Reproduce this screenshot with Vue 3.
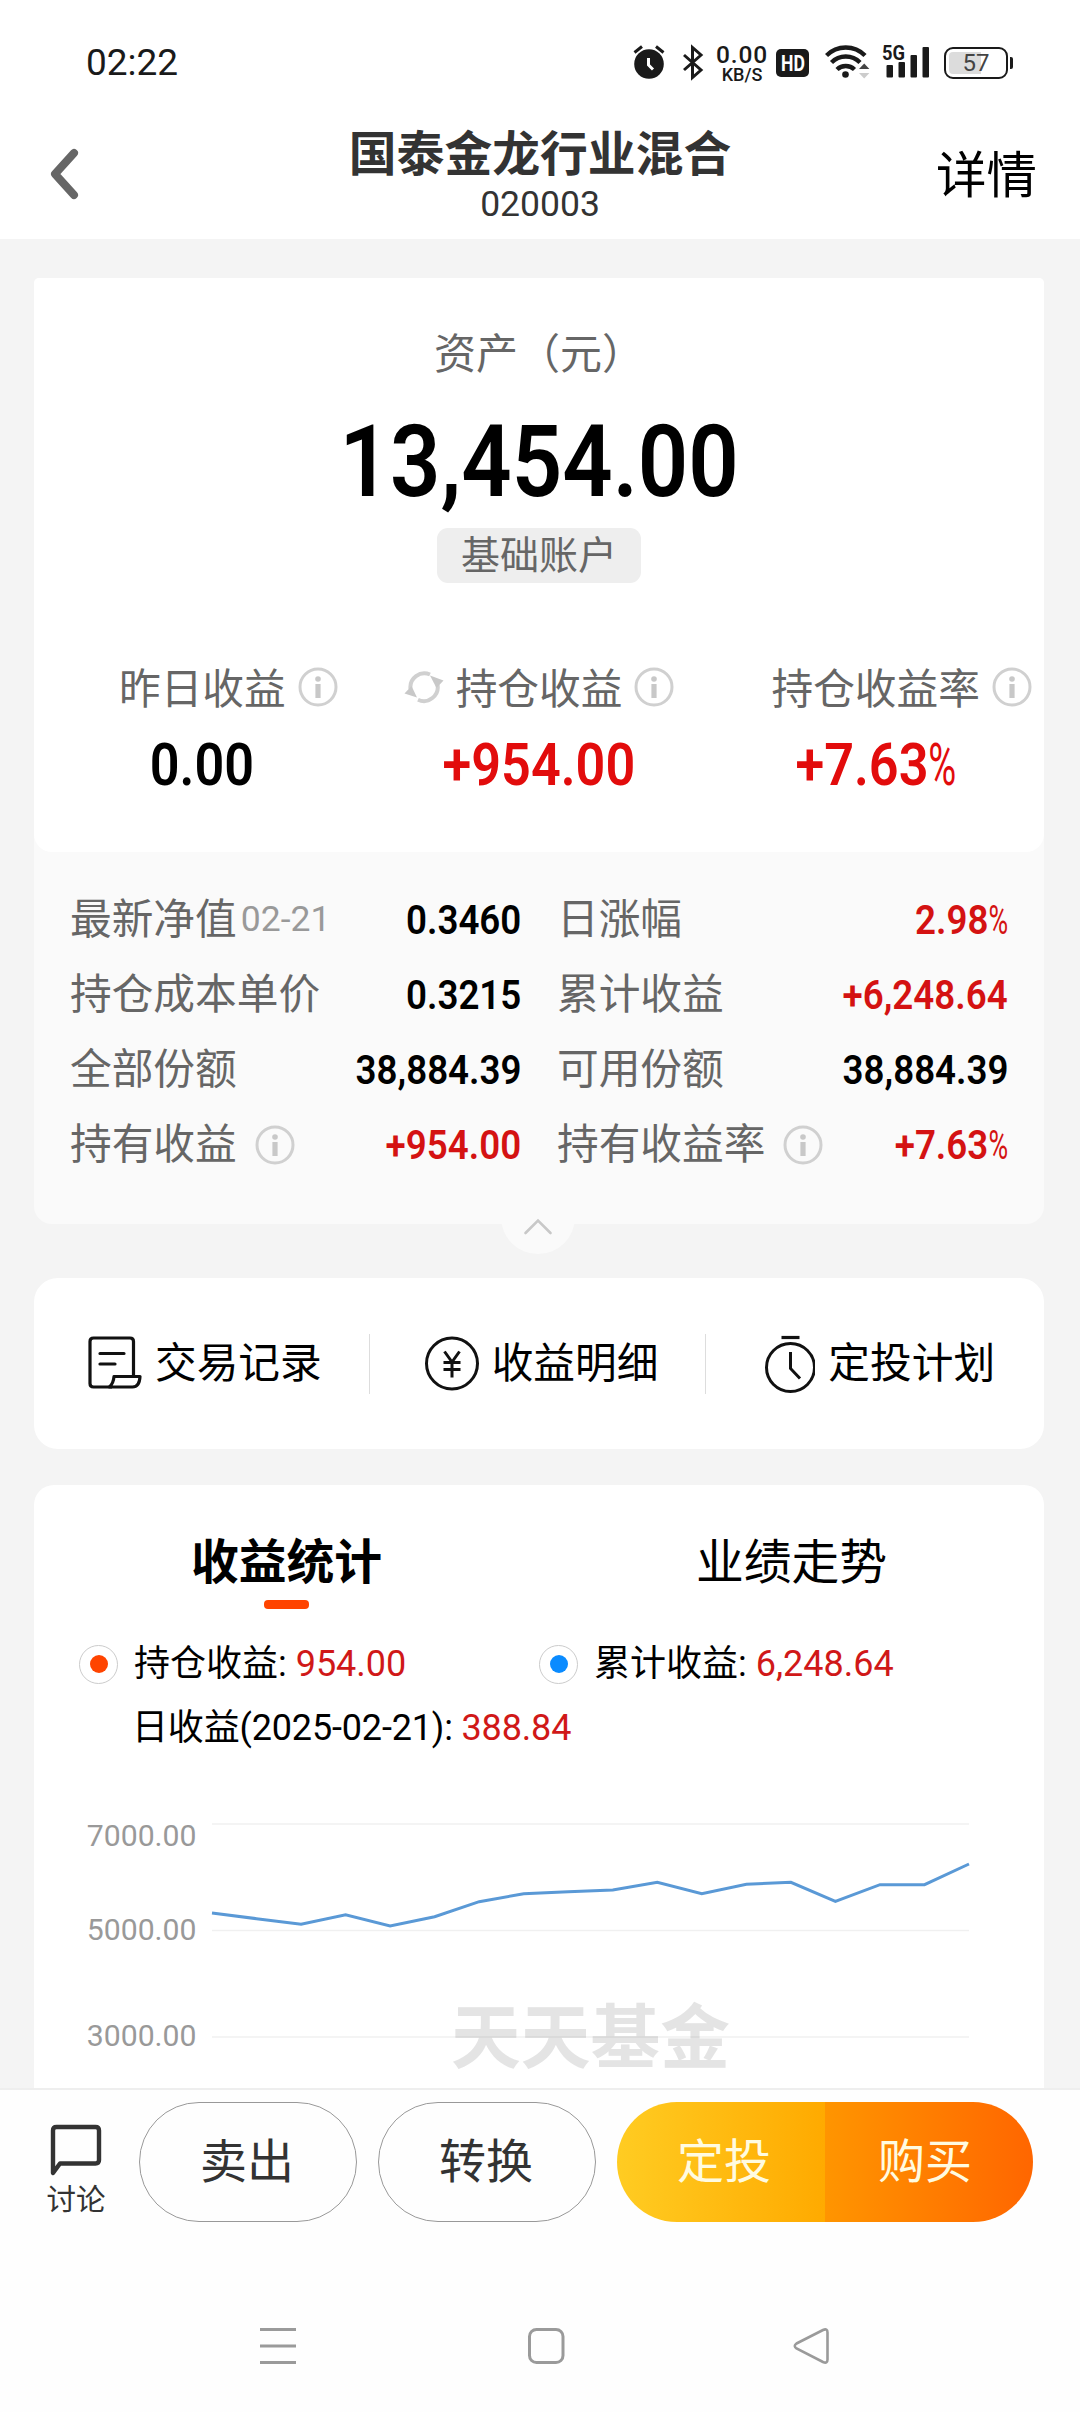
<script setup>
import { h } from 'vue'

const InfoIcon = () =>
  h('svg', { width: 40, height: 40, viewBox: '0 0 40 40', fill: 'none' }, [
    h('circle', { cx: 20, cy: 20, r: 18, stroke: '#d0d0d0', 'stroke-width': 3 }),
    h('circle', { cx: 20, cy: 12, r: 2.8, fill: '#c8c8c8' }),
    h('rect', { x: 17.4, y: 17, width: 5.2, height: 14, fill: '#c8c8c8' }),
  ])

const summary = [
  { label: '昨日收益', value: '0.00' },
  { label: '持仓收益', value: '+954.00', up: true, refresh: true },
  { label: '持仓收益率', value: '+7.63', pct: true, up: true },
]

const details = [
  { label: '最新净值', date: '02-21', value: '0.3460' },
  { label: '日涨幅', value: '2.98', pct: true, up: true },
  { label: '持仓成本单价', value: '0.3215' },
  { label: '累计收益', value: '+6,248.64', up: true },
  { label: '全部份额', value: '38,884.39' },
  { label: '可用份额', value: '38,884.39' },
  { label: '持有收益', info: true, value: '+954.00', up: true },
  { label: '持有收益率', info: true, value: '+7.63', pct: true, up: true },
]

const ticks = [
  { text: '7000.00', grid: 75, base: 97 },
  { text: '5000.00', grid: 181.5, base: 191 },
  { text: '3000.00', grid: 288, base: 297 },
]

const series = [164, 169.7, 175.3, 165.7, 177, 167.7, 152.7, 144.7, 142.7, 141, 133.3, 144.7, 135.3, 133.3, 152.3, 135.7, 135.7, 115]
const line = series.map((y, i) => `${(178 + i * 44.53).toFixed(1)},${y}`).join(' ')
</script>

<template>
  <div class="page">
    <header class="head">
      <div class="status">
        <span class="time">02:22</span>
        <div class="status-icons">
          <svg width="32" height="40" viewBox="0 0 32 40">
            <circle cx="16" cy="22" r="14.8" fill="#1a1a1a" />
            <path d="M1.5 10.5 9 4.5M30.5 10.5 23 4.5" stroke="#1a1a1a" stroke-width="3" />
            <path d="M15.5 16v7l4.500 4.500" stroke="#fff" stroke-width="3" fill="none" />
          </svg>
          <svg class="bt" width="22" height="40" viewBox="0 0 22 40">
            <path d="M2 13 19 28 10.500 35.500V5.500L19 13 2 28" stroke="#1a1a1a" stroke-width="3" fill="none" />
          </svg>
          <div class="speed"><b>0.00</b><i>KB/S</i></div>
          <div class="hd"><span>HD</span></div>
          <svg class="wifi" width="46" height="40" viewBox="0 0 46 40" fill="none" stroke="#1a1a1a" stroke-width="4.4">
            <path d="M1.5 13.5a27 27 0 0 1 38.500 0M6.500 20.500a20 20 0 0 1 28.500 0M12 27.500a12.500 12.500 0 0 1 17.500 0" />
            <circle cx="20.5" cy="32.5" r="3.300" fill="#1a1a1a" stroke="none" />
            <path d="M34 27 39.200 21.500 44.400 27z" fill="#444" stroke="none" />
            <path d="M34 31h10.400l-5.200 5.500z" fill="#ccc" stroke="none" />
          </svg>
          <svg class="signal" width="48" height="40" viewBox="0 0 48 40">
            <g fill="#1a1a1a">
              <rect x="4.5" y="23" width="6.500" height="12.500" rx="1" />
              <rect x="16.5" y="20" width="6.500" height="15.500" rx="1" />
              <rect x="28.5" y="13" width="6.500" height="22.500" rx="1" />
              <rect x="40.5" y="5" width="6.500" height="30.500" rx="1" />
              <text x="0" y="18" font-size="20.5" font-weight="700" textLength="23" lengthAdjust="spacingAndGlyphs">5G</text>
            </g>
          </svg>
          <div class="battery"><span>57</span></div>
        </div>
      </div>
      <div class="bar">
        <svg class="back" width="40" height="60" viewBox="0 0 40 60">
          <path d="M31 9 12 30 31 51" fill="none" stroke="#666" stroke-width="8" stroke-linecap="round" stroke-linejoin="round" />
        </svg>
        <div class="titles">
          <h1>国泰金龙行业混合</h1>
          <p>020003</p>
        </div>
        <span class="more">详情</span>
      </div>
    </header>

    <main class="main">
      <section class="asset">
        <div class="asset-top">
          <p class="caption">资产（元）</p>
          <p class="total"><span class="num">13,454.00</span></p>
          <span class="tag">基础账户</span>
          <div class="summary">
            <div v-for="s in summary" :key="s.label" class="cell">
              <div class="cell-label">
                <svg v-if="s.refresh" class="refresh" width="40" height="36" viewBox="0 0 40 36">
                  <path d="M6.500 20a14 14 0 0 1 19.500-14.500M33.500 15.500A14 14 0 0 1 14 30.800" fill="none" stroke="#d0d0d0" stroke-width="4" />
                  <path d="M26 6.500 39.500 11.500 32.500 19z" fill="#c8c8c8" />
                  <path d="M.5 24.500 7.500 17 13 28.500z" fill="#c8c8c8" />
                </svg>
                <span>{{ s.label }}</span>
                <InfoIcon class="tip" />
              </div>
              <div class="cell-value" :class="{ up: s.up }"><span class="num">{{ s.value }}<i v-if="s.pct" class="pct">%</i></span></div>
            </div>
          </div>
        </div>
        <div class="details">
          <div v-for="d in details" :key="d.label" class="row">
            <span>{{ d.label }}</span>
            <small v-if="d.date">{{ d.date }}</small>
            <InfoIcon v-if="d.info" class="row-tip" />
            <span class="num row-value" :class="{ up: d.up }">{{ d.value }}<i v-if="d.pct" class="pct">%</i></span>
          </div>
        </div>
        <div class="fold">
          <svg width="32" height="20" viewBox="0 0 32 20">
            <path d="M3.500 17 16 4.500 28.500 17" fill="none" stroke="#c8c8c8" stroke-width="2.600" stroke-linecap="round" />
          </svg>
        </div>
      </section>

      <nav class="actions">
        <a>
          <svg width="54" height="60" viewBox="0 0 54 60" fill="none" stroke="#111" stroke-width="3.200" stroke-linejoin="round">
            <path d="M24 53H5.500Q2 53 2 49.500V7.500Q2 4 5.500 4H42Q45.500 4 45.500 7.500V42" />
            <path d="M26 42.500H52Q51.500 53 44.500 53H21.500Q25.500 49 26 42.500z" />
            <path d="M12 19.500h24M12 30h15" stroke-linecap="round" />
          </svg>交易记录</a>
        <a>
          <svg width="54" height="60" viewBox="0 0 54 60" fill="none" stroke="#111" stroke-width="3">
            <circle cx="27" cy="29.500" r="25.500" />
            <path d="M19.500 17.500 27 28 34.500 17.500M27 28v15.500M18.500 28.500h17M18.500 35.500h17" />
          </svg>收益明细</a>
        <a>
          <svg width="54" height="60" viewBox="0 0 54 60" fill="none" stroke="#111" stroke-width="3">
            <circle cx="29.500" cy="33.500" r="24" />
            <path d="M20.500 3.500h18" stroke-width="3.200" />
            <path d="M29.500 18v16.500l9.500 10" />
          </svg>定投计划</a>
      </nav>

      <section class="stats">
        <div class="tabs">
          <div class="tab active">收益统计</div>
          <div class="tab">业绩走势</div>
        </div>
        <div class="legend">
          <div class="key"><span class="ring orange"></span><span>持仓收益: <em>954.00</em></span></div>
          <div class="key"><span class="ring blue"></span><span>累计收益: <em>6,248.64</em></span></div>
        </div>
        <p class="daily">日收益(2025-02-21): <em>388.84</em></p>
        <svg class="chart" width="1010" height="351" viewBox="0 0 1010 351">
          <text class="watermark" x="417" y="314" textLength="279" lengthAdjust="spacingAndGlyphs">天天基金</text>
          <g v-for="t in ticks" :key="t.text">
            <line x1="178" x2="935" :y1="t.grid" :y2="t.grid" stroke="#000" stroke-opacity=".06" stroke-width="1.5" />
            <text class="tick" x="162.5" :y="t.base" text-anchor="end">{{ t.text }}</text>
          </g>
          <polyline :points="line" fill="none" stroke="#5a99d6" stroke-width="3" />
        </svg>
      </section>
    </main>

    <footer class="foot">
      <div class="trade">
        <div class="talk">
          <svg width="54" height="56" viewBox="0 0 54 56">
            <path d="M4 51V8.500Q4 5 7.500 5H46.500Q50 5 50 8.500V38Q50 41.500 46.500 41.500H11z" fill="none" stroke="#333" stroke-width="4.400" stroke-linejoin="round" />
          </svg>
          <span>讨论</span>
        </div>
        <button class="ghost">卖出</button>
        <button class="ghost">转换</button>
        <div class="buy"><button class="plan">定投</button><button class="now">购买</button></div>
      </div>
      <div class="sysnav">
        <svg width="1080" height="44" viewBox="0 0 1080 44" fill="none" stroke="#9a9a9a" stroke-width="3">
          <path d="M260 5.500h36M260 22h36M260 38.500h36" />
          <rect x="529.500" y="5.500" width="33.500" height="33" rx="7" />
          <path d="M796.500 19.500 823 6Q827.500 4 827.500 8.500V35.500Q827.500 40 823 38L796.500 24.500Q793 22 796.500 19.500z" stroke-width="2.600" />
        </svg>
      </div>
    </footer>
  </div>
</template>

<style>
body {
  margin: 0;
  background: #f4f4f4;
}
</style>

<style scoped>
.page {
  width: 1080px;
  height: 2412px;
  overflow: hidden;
  display: flex;
  flex-direction: column;
  background: #f4f4f4;
  color: #000;
  font-family: Roboto, "Noto Sans CJK SC", sans-serif;
}
h1,
p {
  margin: 0;
}
i,
em {
  font-style: normal;
}
svg {
  display: block;
  flex: none;
}
.head {
  height: 239px;
  background: #fff;
}
.status {
  height: 84px;
  padding: 0 67px 0 86px;
  display: flex;
  justify-content: space-between;
  color: #1a1a1a;
}
.time {
  font-size: 37px;
  line-height: 125px;
}
.status-icons {
  display: flex;
  height: 40px;
  margin-top: 42px;
}
.bt {
  margin-left: 17px;
}
.speed {
  width: 52px;
  margin-left: 12px;
  display: flex;
  flex-direction: column;
  align-items: center;
  white-space: nowrap;
}
.speed b {
  font-size: 24.5px;
  font-weight: 500;
  line-height: 25px;
  letter-spacing: 0.9px;
}
.speed i {
  font-size: 18px;
  font-weight: 500;
  line-height: 15px;
}
.hd {
  width: 33px;
  height: 28px;
  margin: 7px 0 0 8px;
  border-radius: 5px;
  background: #1a1a1a;
  color: #fff;
  display: flex;
  justify-content: center;
  font-size: 22px;
  font-weight: 700;
  line-height: 29px;
}
.hd span {
  transform: scaleX(0.8);
}
.wifi {
  margin-left: 16px;
}
.signal {
  margin-left: 11px;
}
.battery {
  position: relative;
  box-sizing: border-box;
  width: 64px;
  height: 32px;
  margin: 5px 5px 0 14px;
  border: 2.5px solid #1a1a1a;
  border-radius: 9px;
  background: linear-gradient(90deg, #dcdcdc 32px, #fff 32px) content-box;
  padding: 3px;
  color: #444;
  font-size: 24px;
  line-height: 22px;
  text-align: center;
}
.battery::after {
  content: "";
  position: absolute;
  right: -7px;
  top: 8px;
  width: 3px;
  height: 12px;
  border-radius: 0 2px 2px 0;
  background: #1a1a1a;
}
.bar {
  height: 155px;
  padding: 0 43px;
  display: grid;
  grid-template-columns: 1fr auto 1fr;
}
.back {
  margin-top: 60px;
}
.titles {
  padding-top: 43px;
  text-align: center;
  color: #333;
}
.titles h1 {
  font-size: 47.8px;
  font-weight: 700;
  line-height: 56px;
}
.titles p {
  font-size: 35.5px;
  line-height: 42px;
}
.more {
  justify-self: end;
  margin-top: 62px;
  font-size: 50.5px;
  line-height: 60px;
}
.main {
  height: 1849px;
  padding: 39px 36px 0 34px;
  box-sizing: border-box;
  overflow: hidden;
}
.asset {
  position: relative;
  height: 946px;
  border-radius: 5px 5px 18px 18px;
  background: #fafafa;
}
.asset-top {
  height: 574px;
  padding-top: 47px;
  box-sizing: border-box;
  border-radius: 5px 5px 18px 18px;
  background: #fff;
  text-align: center;
}
.caption {
  font-size: 42px;
  line-height: 60px;
  color: #666;
}
.num {
  display: inline-block;
  font-weight: 600;
  white-space: nowrap;
  transform: scaleX(0.885);
}
.pct {
  display: inline-block;
  width: 0.53em;
  font-weight: 400;
  transform: scaleX(0.73);
  transform-origin: left;
}
.total {
  margin-top: 22px;
  font-size: 101px;
  line-height: 110px;
}
.total .num {
  transform: scaleX(0.875);
}
.tag {
  display: block;
  width: 204px;
  height: 55px;
  margin: 11px auto 0;
  border-radius: 11px;
  background: #eee;
  font-size: 39px;
  line-height: 56px;
  color: #666;
}
.summary {
  margin-top: 77px;
  display: flex;
}
.cell {
  flex: 1;
  display: flex;
  flex-direction: column;
  align-items: center;
}
.cell-label {
  position: relative;
  font-size: 41.7px;
  line-height: 60px;
  color: #666;
}
.tip {
  position: absolute;
  left: 100%;
  top: 7px;
  margin-left: 12px;
}
.refresh {
  position: absolute;
  right: 100%;
  top: 9px;
  margin-right: 12px;
}
.cell-value {
  margin-top: 10px;
  font-size: 59px;
  line-height: 70px;
}
.up {
  color: #e20c0c;
}
.details {
  padding: 30px 36px 0 36px;
  display: grid;
  grid-template-columns: 451px 451px;
  column-gap: 36px;
}
.row {
  height: 75px;
  display: flex;
  align-items: center;
  font-size: 41.7px;
  line-height: 75px;
  color: #666;
}
.row small {
  margin-left: 4px;
  font-size: 35.5px;
  color: #999;
}
.row-tip {
  margin-left: 18px;
}
.row-value {
  margin-left: auto;
  font-size: 41.5px;
  color: #000;
  transform-origin: right;
}
.row-value.up {
  color: #d41212;
}
.fold {
  position: absolute;
  left: 467px;
  bottom: -30px;
  width: 74px;
  height: 74px;
  border-radius: 50%;
  background: #fafafa;
  display: flex;
  justify-content: center;
}
.fold svg {
  margin-top: 36px;
}
.actions {
  height: 171px;
  margin-top: 54px;
  border-radius: 24px;
  background: #fff;
  display: flex;
  align-items: center;
}
.actions a {
  flex: 1;
  position: relative;
  display: flex;
  align-items: center;
  gap: 13px;
  padding-left: 54px;
  font-size: 41.7px;
  line-height: 60px;
}
.actions a + a::before {
  content: "";
  position: absolute;
  left: -2px;
  top: 0;
  width: 1px;
  height: 60px;
  background: #ddd;
}
.stats {
  margin-top: 36px;
  height: 640px;
  border-radius: 20px;
  background: #fff;
}
.tabs {
  display: flex;
  padding-top: 48px;
}
.tab {
  flex: 1;
  height: 76px;
  text-align: center;
  font-size: 47.8px;
  line-height: 60px;
}
.active {
  font-weight: 700;
}
.active::after {
  content: "";
  display: block;
  width: 45px;
  height: 9px;
  margin: 7px auto 0;
  border-radius: 4px;
  background: #ff4400;
}
.legend {
  margin-top: 34px;
  padding-left: 45px;
  display: flex;
}
.key {
  width: 460px;
  display: flex;
  align-items: center;
  gap: 16px;
  font-size: 36px;
  line-height: 42px;
  white-space: pre;
}
.ring {
  box-sizing: border-box;
  width: 39px;
  height: 39px;
  border: 1.5px solid #ccc;
  border-radius: 50%;
  display: flex;
  align-items: center;
  justify-content: center;
}
.ring::after {
  content: "";
  width: 18px;
  height: 18px;
  border-radius: 50%;
}
.orange::after {
  background: #ff4400;
}
.blue::after {
  background: #0a8bff;
}
em {
  color: #d01818;
}
.daily {
  margin-top: 22px;
  padding-left: 98px;
  font-size: 36px;
  line-height: 42px;
  letter-spacing: -0.16px;
}
.watermark {
  font-family: "Noto Sans CJK SC", sans-serif;
  font-size: 70px;
  font-weight: 700;
  fill: #e4e4e4;
}
.tick {
  font-size: 30.2px;
  fill: #999;
}
.foot {
  flex: 1;
  border-top: 2px solid #eee;
  background: #fefefe;
}
.trade {
  display: flex;
  padding: 12px 0 0 40px;
}
.talk {
  width: 72px;
  margin: 20px 27px 0 0;
  display: flex;
  flex-direction: column;
  align-items: center;
  font-size: 29.5px;
  line-height: 38px;
  color: #333;
}
.talk svg {
  margin-bottom: 3px;
}
button {
  padding: 0;
  border: 0;
  background: none;
  font-family: inherit;
  font-size: 47px;
  line-height: 120px;
  color: #333;
}
.ghost {
  box-sizing: border-box;
  width: 218px;
  height: 120px;
  margin-right: 21px;
  padding-right: 2px;
  border: 1.5px solid #999;
  border-radius: 60px;
  line-height: 118px;
}
.buy {
  display: flex;
  width: 416px;
  height: 120px;
  border-radius: 60px;
  overflow: hidden;
}
.buy button {
  box-sizing: border-box;
  width: 208px;
  color: #fffbe0;
}
.plan {
  padding-left: 6px;
  background: linear-gradient(90deg, #ffcc22, #ffaa00);
}
.now {
  padding-right: 8px;
  background: linear-gradient(90deg, #ff9500, #ff6600);
}
.sysnav {
  margin-top: 102px;
}
</style>
